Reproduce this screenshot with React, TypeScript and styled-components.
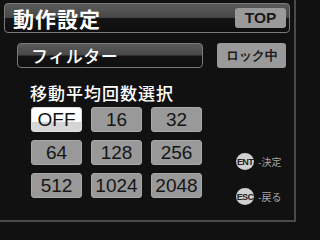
import { FC } from "react";
import styled, { createGlobalStyle } from "styled-components";

const GlobalStyle = createGlobalStyle`
	* {
		box-sizing: border-box;
	}
	body {
		margin: 0;
		background: #111;
		font-family: "Noto Sans CJK JP", "Liberation Sans", sans-serif;
	}
`;

const VALUES = ["OFF", "16", "32", "64", "128", "256", "512", "1024", "2048"];

const LEGEND = [
	{ key: "ENT", label: "-決定" },
	{ key: "ESC", label: "-戻る" },
];

const App: FC = () => {
	return (
		<>
			<GlobalStyle />
			<Screen>
				<TitleBar>
					<Title>動作設定</Title>
					<TopBtn type="button">TOP</TopBtn>
				</TitleBar>

				<FilterRow>
					<FilterBar>フィルター</FilterBar>
					<LockBtn type="button">ロック中</LockBtn>
				</FilterRow>

				<Heading>移動平均回数選択</Heading>

				<Body>
					<Grid>
						{VALUES.map((v) => (
							<ValueBtn key={v} type="button" $active={v === "OFF"}>
								{v}
							</ValueBtn>
						))}
					</Grid>

					<Legend>
						{LEGEND.map((item) => (
							<LegendItem key={item.key}>
								<KeyCircle>{item.key}</KeyCircle>
								<KeyLabel>{item.label}</KeyLabel>
							</LegendItem>
						))}
					</Legend>
				</Body>
			</Screen>
		</>
	);
};

export default App;

const Screen = styled.div`
	width: 296px;
	height: 222px;
	padding: 3px 0 0 4px;
	border-right: 2px solid #4a4a4a;
	border-bottom: 2px solid #4a4a4a;
	background: #111;
	overflow: hidden;
`;

const glossy = `
	border: 1px solid #7a7a7a;
	border-radius: 4px;
	background: linear-gradient(to bottom, #5a5a5a 0%, #484848 48%, #141414 52%, #0e0e0e 100%);
`;

const TitleBar = styled.div`
	${glossy}
	width: 286px;
	height: 30px;
	display: flex;
	align-items: center;
	justify-content: space-between;
	padding: 0 3px 0 8px;
`;

const Title = styled.span`
	color: #fff;
	font-size: 21px;
	font-weight: 700;
	letter-spacing: 1px;
	line-height: 1;
`;

const TopBtn = styled.button`
	width: 51px;
	height: 20px;
	border: none;
	border-radius: 3px;
	background: #9a9a9a;
	color: #1a1a1a;
	font-family: "Liberation Sans", sans-serif;
	font-size: 15.5px;
	font-weight: 700;
	padding: 0;
	line-height: 20px;
`;

const FilterRow = styled.div`
	display: flex;
	gap: 14px;
	margin-top: 10px;
	padding-left: 13px;
`;

const FilterBar = styled.div`
	${glossy}
	width: 186px;
	height: 25px;
	display: flex;
	align-items: center;
	padding-left: 13px;
	color: #fff;
	font-size: 17px;
	font-weight: 500;
	letter-spacing: 0.5px;
`;

const LockBtn = styled.button`
	width: 69px;
	height: 25px;
	border: none;
	border-radius: 3px;
	background: #9a9a9a;
	color: #1a1a1a;
	font-size: 13px;
	font-weight: 700;
	padding: 0;
`;

const Heading = styled.div`
	margin-top: 14px;
	padding-left: 26px;
	color: #fff;
	font-size: 17px;
	font-weight: 500;
	letter-spacing: 1px;
	line-height: 22px;
`;

const Body = styled.div`
	display: flex;
	margin-top: 3px;
	padding-left: 27px;
`;

const Grid = styled.div`
	display: grid;
	grid-template-columns: repeat(3, 51px);
	grid-auto-rows: 25px;
	column-gap: 9px;
	row-gap: 8px;
`;

const ValueBtn = styled.button<{ $active?: boolean }>`
	border: 1px solid ${(p) => (p.$active ? "#e0e0e0" : "#a8a8a8")};
	border-radius: 3px;
	background: ${(p) =>
		p.$active ? "linear-gradient(to bottom, #fff 0%, #fff 58%, #d4d4d4 62%, #d8d8d8 100%)" : "#999"};
	color: #151515;
	font-family: "Liberation Sans", sans-serif;
	font-size: 19px;
	padding: 0;
	line-height: 23px;
`;

const Legend = styled.div`
	display: flex;
	flex-direction: column;
	gap: 18px;
	padding-top: 46px;
	margin-left: 34px;
`;

const LegendItem = styled.div`
	display: flex;
	align-items: center;
	gap: 4px;
`;

const KeyCircle = styled.span`
	width: 18px;
	height: 17px;
	border-radius: 50%;
	background: #d0d0d0;
	color: #222;
	font-family: "Liberation Sans", sans-serif;
	font-size: 9px;
	font-weight: 700;
	letter-spacing: -0.7px;
	display: flex;
	align-items: center;
	justify-content: center;
`;

const KeyLabel = styled.span`
	color: #a8a8a8;
	font-size: 10px;
	line-height: 1;
`;
